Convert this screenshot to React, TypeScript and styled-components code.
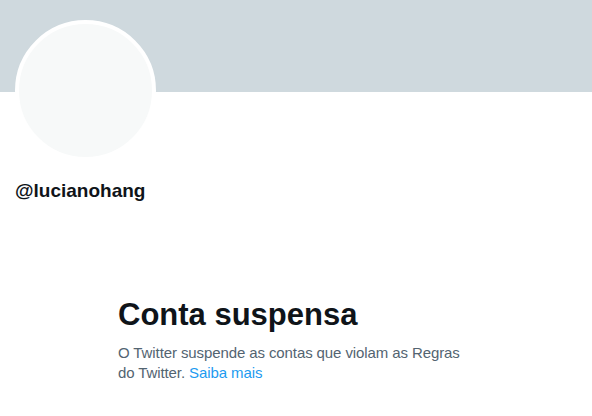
import React from "react";
import styled, { createGlobalStyle } from "styled-components";

const GlobalStyle = createGlobalStyle`
  html, body {
    margin: 0;
    padding: 0;
    background: #ffffff;
  }
  body {
    font-family: "Liberation Sans", Arial, sans-serif;
    color: #0f1419;
  }
`;

export default function App() {
  return (
    <>
      <GlobalStyle />
      <Page>
        <Banner />
        <ProfileHeader>
          <Avatar />
          <Handle>@lucianohang</Handle>
        </ProfileHeader>
        <EmptyState>
          <Title>Conta suspensa</Title>
          <Message>
            O Twitter suspende as contas que violam as Regras do Twitter.{" "}
            <LearnMore href="#">Saiba mais</LearnMore>
          </Message>
        </EmptyState>
      </Page>
    </>
  );
}

const Page = styled.main`
  width: 592px;
  min-height: 416px;
  display: flex;
  flex-direction: column;
  background: #ffffff;
`;

const Banner = styled.div`
  height: 92px;
  background-color: #cfd9de;
`;

const ProfileHeader = styled.section`
  display: flex;
  flex-direction: column;
  align-items: flex-start;
  padding: 0 15px;
`;

const Avatar = styled.div`
  width: 133px;
  height: 133px;
  margin-top: -72px;
  border: 4px solid #ffffff;
  border-radius: 50%;
  background-color: #f7f9f9;
`;

const Handle = styled.div`
  margin-top: 18px;
  font-size: 19px;
  line-height: 24px;
  font-weight: 700;
  color: #0f1419;
`;

const EmptyState = styled.section`
  width: 356px;
  margin: 94px auto 0;
  display: flex;
  flex-direction: column;
  gap: 10px;
`;

const Title = styled.h1`
  margin: 0;
  font-size: 31px;
  line-height: 36px;
  font-weight: 700;
  color: #0f1419;
`;

const Message = styled.p`
  margin: 0;
  font-size: 15px;
  line-height: 20px;
  letter-spacing: -0.1px;
  color: #536471;
`;

const LearnMore = styled.a`
  color: #1d9bf0;
  text-decoration: none;
`;
